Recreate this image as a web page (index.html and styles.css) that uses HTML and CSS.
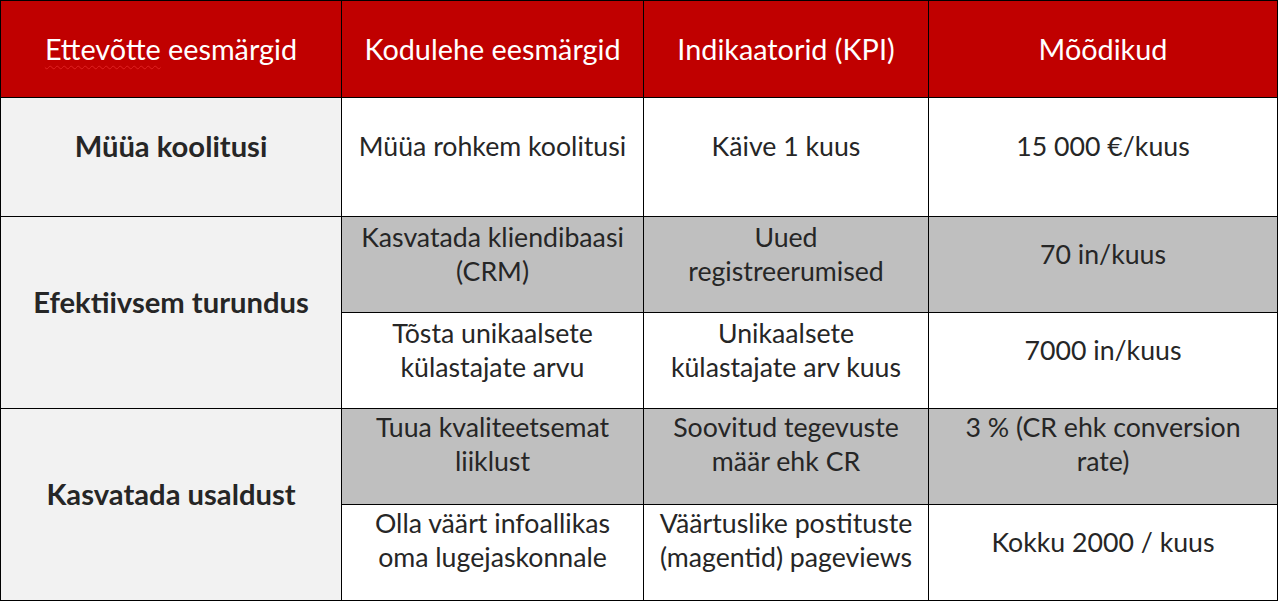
FILE: index.html
```html
<!DOCTYPE html>
<html lang="et">
<head>
<meta charset="utf-8">
<title>Eesmärgid</title>
<link rel="stylesheet" href="styles.css">
</head>
<body>
<div class="table">
  <div class="cell head"><span><span class="spell">Ettevõtte</span> eesmärgid</span></div>
  <div class="cell head">Kodulehe eesmärgid</div>
  <div class="cell head">Indikaatorid (KPI)</div>
  <div class="cell head">Mõõdikud</div>

  <div class="cell goal">Müüa koolitusi</div>
  <div class="cell">Müüa rohkem koolitusi</div>
  <div class="cell">Käive 1 kuus</div>
  <div class="cell">15 000 €/kuus</div>

  <div class="cell goal span2">Efektiivsem turundus</div>
  <div class="cell gray">Kasvatada kliendibaasi<br>(CRM)</div>
  <div class="cell gray">Uued<br>registreerumised</div>
  <div class="cell gray">70 in/kuus</div>
  <div class="cell">Tõsta unikaalsete<br>külastajate arvu</div>
  <div class="cell">Unikaalsete<br>külastajate arv kuus</div>
  <div class="cell">7000 in/kuus</div>

  <div class="cell goal span2">Kasvatada usaldust</div>
  <div class="cell gray top">Tuua kvaliteetsemat<br>liiklust</div>
  <div class="cell gray top">Soovitud tegevuste<br>määr ehk CR</div>
  <div class="cell gray top">3 % (CR ehk conversion<br>rate)</div>
  <div class="cell top">Olla väärt infoallikas<br>oma lugejaskonnale</div>
  <div class="cell top">Väärtuslike postituste<br>(magentid) pageviews</div>
  <div class="cell">Kokku 2000 / kuus</div>
</div>
</body>
</html>
```
FILE: styles.css
```css
html, body {
  margin: 0;
  padding: 0;
  background: #ffffff;
}
.table {
  display: grid;
  grid-template-columns: 340px 301px 284px 348px;
  grid-template-rows: 96px 118px 95px 95px 95px 95px;
  gap: 1px;
  padding: 1px;
  background: #000000;
  width: 1276px;
  font-family: Lato, "Open Sans", sans-serif;
  font-size: 26.7px;
  line-height: 34px;
  color: #262626;
}
.cell {
  background: #ffffff;
  display: flex;
  align-items: center;
  justify-content: center;
  text-align: center;
  padding-bottom: 22px;
  box-sizing: border-box;
}
.head {
  background: #c00000;
  color: #ffffff;
  font-size: 28.8px;
  padding-bottom: 0;
}
.spell {
  text-decoration: underline wavy #e02020;
  text-decoration-thickness: 1px;
  text-underline-offset: 5px;
}
.goal {
  background: #f2f2f2;
  font-weight: bold;
  font-size: 29.2px;
}
.span2 {
  grid-row: span 2;
}
.gray {
  background: #bfbfbf;
}
.top {
  align-items: flex-start;
  padding-top: 1px;
  padding-bottom: 0;
}
```
